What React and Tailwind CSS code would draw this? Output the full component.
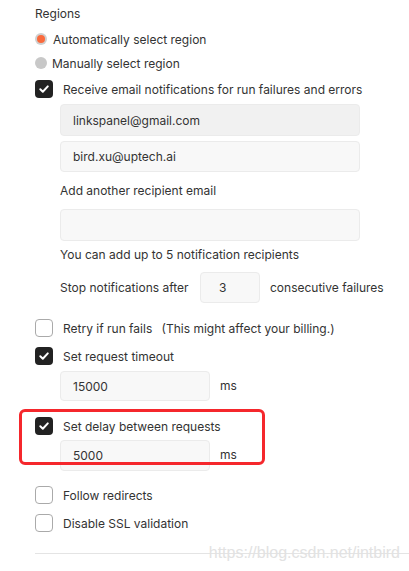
import React from "react";

const Check = ({ checked }) =>
  checked ? (
    <span className="flex h-[18px] w-[18px] shrink-0 items-center justify-center rounded-[4px] bg-[#222]">
      <svg width="12" height="12" viewBox="0 0 12 12" fill="none">
        <path d="M2.3 6.3 4.8 8.7 9.8 3.4" stroke="#fff" strokeWidth="2" strokeLinecap="round" strokeLinejoin="round" />
      </svg>
    </span>
  ) : (
    <span className="h-[18px] w-[18px] shrink-0 rounded-[4px] border border-[#aaa] bg-white" />
  );

const CheckRow = ({ checked, children, className = "" }) => (
  <div className={`flex h-[18px] items-center ${className}`}>
    <Check checked={checked} />
    <span className="ml-[10px] pt-[1px]">{children}</span>
  </div>
);

const Field = ({ value, className = "", disabled }) => (
  <div
    className={`flex items-center rounded-[4px] border border-[#ebebeb] pt-[1px] ${
      disabled ? "bg-[#f1f1f1]" : "bg-[#f8f8f8]"
    } ${className}`}
  >
    {value}
  </div>
);

const App = () => {
  return (
    <div className="h-[571px] w-[409px] overflow-hidden bg-white font-['Inter',sans-serif] text-[12px] text-[#333]">
      <div className="pl-[35px]">
        <div className="flex h-[26px] items-center pt-[1px]">Regions</div>

        <div className="flex h-[26px] items-center">
          <span className="flex h-[12px] w-[12px] items-center justify-center rounded-full bg-[#cfcfcf]">
            <span className="h-[8px] w-[8px] rounded-full bg-[#fa6a3c]" />
          </span>
          <span className="ml-[6px] pt-[1px]">Automatically select region</span>
        </div>
        <div className="flex h-[22px] items-center">
          <span className="h-[12px] w-[12px] rounded-full bg-[#c8c8c8]" />
          <span className="ml-[5px] pt-[1px]">Manually select region</span>
        </div>

        <div className="flex h-[30px] items-center">
          <Check checked />
          <span className="ml-[10px] pt-[1px]">Receive email notifications for run failures and errors</span>
        </div>

        <div className="pl-[25px]">
          <Field value="linkspanel@gmail.com" disabled className="h-[32px] w-[300px] px-[12px]" />
          <Field value="bird.xu@uptech.ai" className="mt-[5px] h-[31px] w-[300px] px-[12px]" />
          <div className="flex h-[37px] items-center pt-[1px]">Add another recipient email</div>
          <Field value="" className="h-[32px] w-[300px] px-[12px]" />
          <div className="flex h-[26px] items-center pt-[1px]">You can add up to 5 notification recipients</div>
          <div className="mt-[5px] flex h-[31px] items-center">
            <span className="w-[140px] pt-[1px]">Stop notifications after</span>
            <Field value="3" className="h-[31px] w-[60px] pl-[18px]" />
            <span className="ml-[10px] pt-[1px]">consecutive failures</span>
          </div>
        </div>

        <CheckRow className="mt-[16px]">
          Retry if run fails <span className="ml-[6px]">(This might affect your billing.)</span>
        </CheckRow>
        <CheckRow checked className="mt-[10px]">Set request timeout</CheckRow>
        <div className="mt-[6px] flex items-center pl-[25px]">
          <Field value="15000" className="h-[30px] w-[150px] px-[12px]" />
          <span className="ml-[10px]">ms</span>
        </div>

        <div className="relative mt-[16px]">
          <CheckRow checked>Set delay between requests</CheckRow>
          <div className="mt-[5px] flex items-center pl-[25px]">
            <Field value="5000" className="h-[31px] w-[150px] px-[12px]" />
            <span className="ml-[10px] -mt-[2px]">ms</span>
          </div>
          <div className="absolute left-[-16px] top-[-8px] h-[56px] w-[246px] rounded-[6px] border-[3px] border-[#f5272c]" />
        </div>

        <CheckRow className="mt-[15px]">Follow redirects</CheckRow>
        <CheckRow className="mt-[10px]">Disable SSL validation</CheckRow>

        <div className="relative mt-[21px] border-t border-[#e4e4e4]">
          <span className="absolute right-[9px] top-[-11px] font-['Liberation_Sans',sans-serif] text-[16px] leading-[20px] text-[#e2e2e2]">
            https://blog.csdn.net/intbird
          </span>
        </div>
      </div>
    </div>
  );
};

export default App;
